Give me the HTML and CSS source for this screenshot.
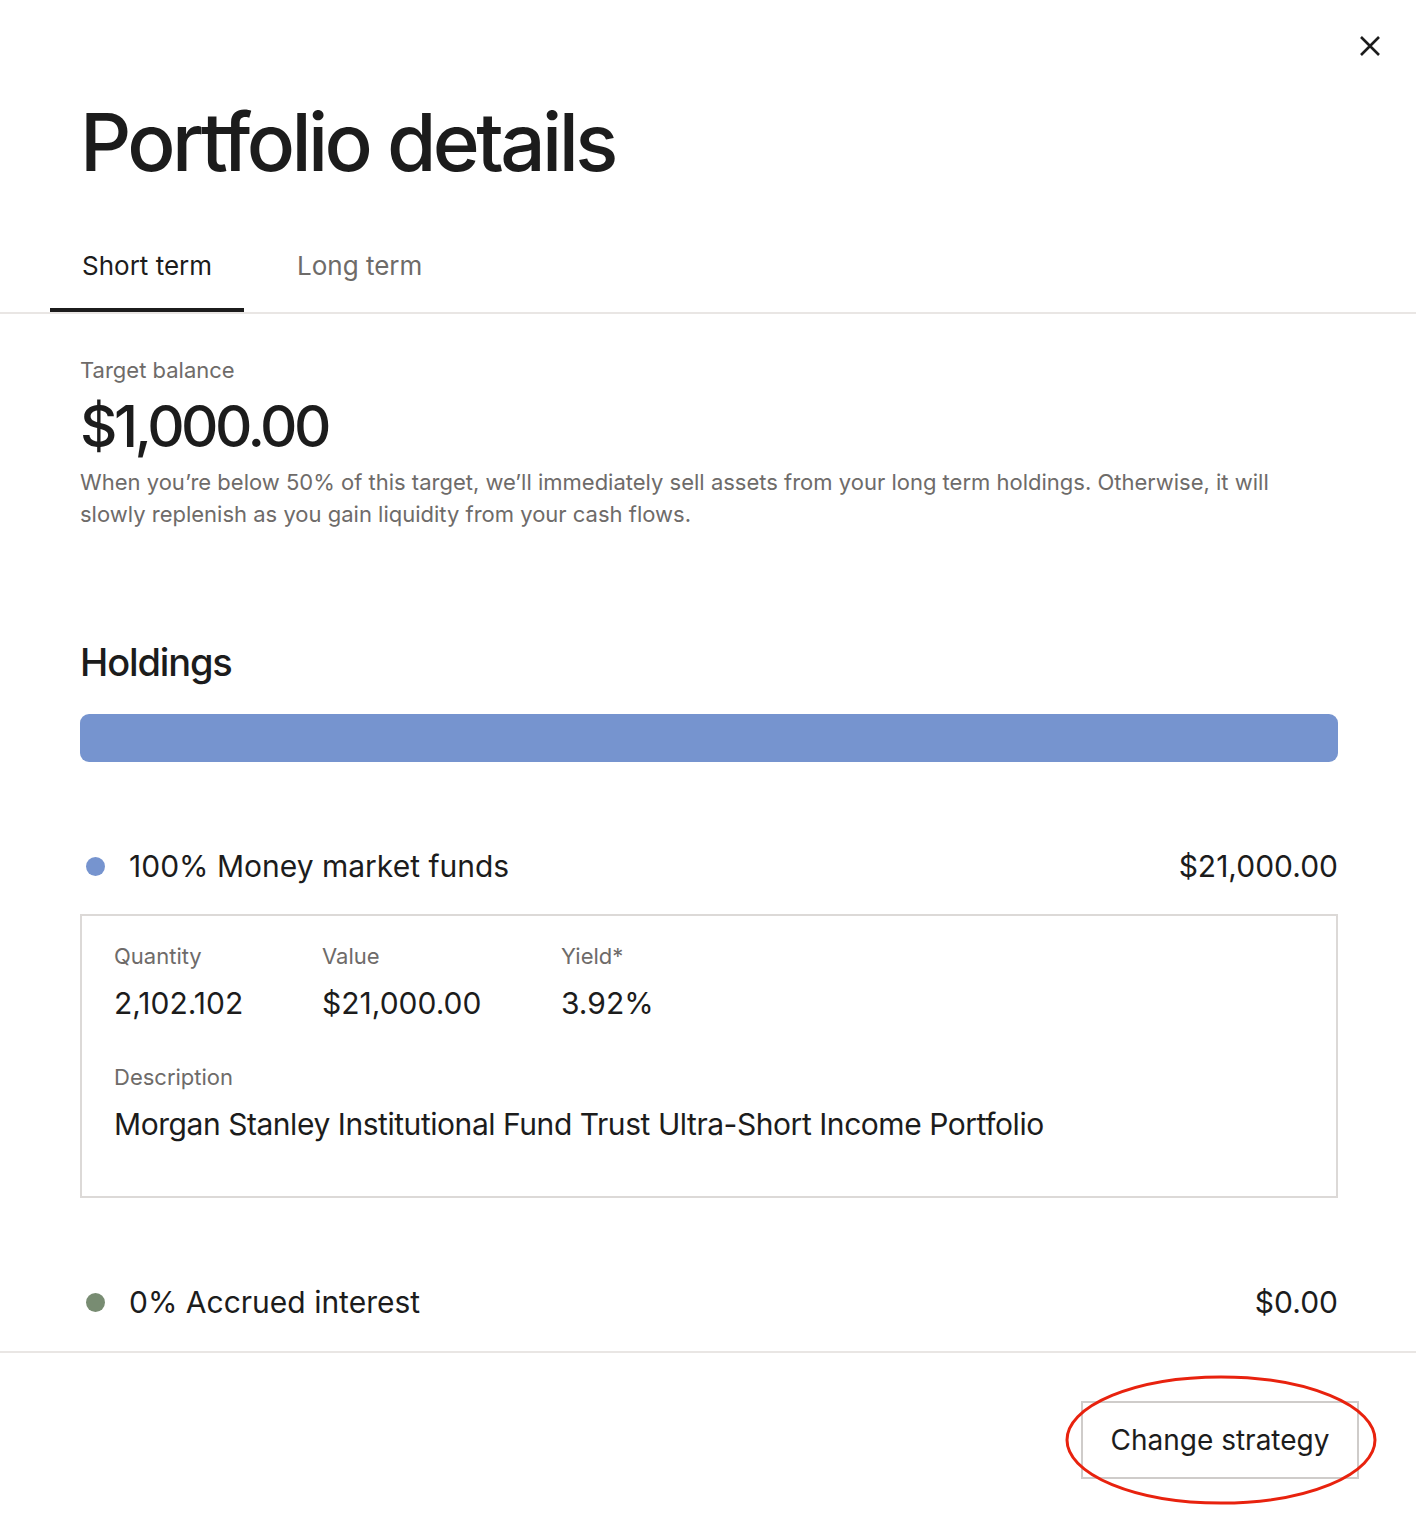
FILE: index.html
```html
<!DOCTYPE html>
<html lang="en">
<head>
    <meta charset="UTF-8">
    <meta name="viewport" content="width=device-width, initial-scale=1.0">
    <title>Portfolio details</title>
    <link rel="stylesheet" href="styles.css">
</head>
<body>
    <div class="panel">
        <header class="panel-header">
            <button class="close-button" aria-label="Close">
                <svg width="22" height="22" viewBox="0 0 22 22">
                    <path d="M2 2 L20 20 M20 2 L2 20" stroke="#1c1c1c" stroke-width="2.6" stroke-linecap="butt"/>
                </svg>
            </button>
            <h1>Portfolio details</h1>
        </header>

        <nav class="tabs">
            <button class="tab active">Short term</button>
            <button class="tab">Long term</button>
        </nav>

        <main class="content">
            <section class="target">
                <div class="label">Target balance</div>
                <div class="target-amount">$1,000.00</div>
                <p class="target-note">When you’re below 50% of this target, we’ll immediately sell assets from your long term holdings. Otherwise, it will slowly replenish as you gain liquidity from your cash flows.</p>
            </section>

            <section class="holdings">
                <h2>Holdings</h2>
                <div class="allocation-bar">
                    <div class="allocation-segment" style="width: 100%; background-color: #7694cf;"></div>
                </div>

                <div class="holding-row">
                    <span class="dot dot-blue"></span>
                    <span class="holding-name">100% Money market funds</span>
                    <span class="holding-amount">$21,000.00</span>
                </div>

                <div class="holding-card">
                    <div class="stats">
                        <div class="stat stat-quantity">
                            <div class="label">Quantity</div>
                            <div class="stat-value">2,102.102</div>
                        </div>
                        <div class="stat stat-value-col">
                            <div class="label">Value</div>
                            <div class="stat-value">$21,000.00</div>
                        </div>
                        <div class="stat">
                            <div class="label">Yield*</div>
                            <div class="stat-value">3.92%</div>
                        </div>
                    </div>
                    <div class="label">Description</div>
                    <div class="stat-value description">Morgan Stanley Institutional Fund Trust Ultra-Short Income Portfolio</div>
                </div>

                <div class="holding-row last">
                    <span class="dot dot-green"></span>
                    <span class="holding-name">0% Accrued interest</span>
                    <span class="holding-amount">$0.00</span>
                </div>
            </section>
        </main>

        <footer class="panel-footer">
            <div class="button-wrap">
                <button class="outline-button">Change strategy</button>
                <svg class="annotation" width="314" height="132" viewBox="0 0 314 132">
                    <ellipse cx="157" cy="66" rx="154" ry="63" fill="none" stroke="#e8220e" stroke-width="3"/>
                </svg>
            </div>
        </footer>
    </div>
</body>
</html>
```

FILE: styles.css
```css
body {
    margin: 0;
    padding: 0;
    background: #ffffff;
    color: #1c1c1c;
    font-family: Inter, "Noto Sans", Arial, sans-serif;
}
.panel {
    width: 1416px;
    display: flex;
    flex-direction: column;
}
.panel-header {
    position: relative;
    padding: 96px 80px 0 80px;
}
.close-button {
    position: absolute;
    top: 35px;
    right: 35px;
    background: none;
    border: none;
    padding: 0;
    cursor: pointer;
}
h1 {
    margin: 0;
    font-size: 80px;
    font-weight: 500;
    letter-spacing: -0.045em;
    line-height: 92px;
}
.tabs {
    display: flex;
    gap: 21px;
    margin-top: 44px;
    padding-left: 50px;
    border-bottom: 2px solid #e9e6e4;
}
.tab {
    background: none;
    border: none;
    border-bottom: 4px solid transparent;
    padding: 18px 32px 27px 32px;
    font-family: inherit;
    font-size: 26px;
    color: #6e6b69;
    cursor: pointer;
}
.tab.active {
    color: #1c1c1c;
    border-bottom-color: #1c1c1c;
}
.content {
    padding: 43px 78px 0 80px;
}
.label {
    font-size: 22px;
    color: #6e6b69;
}
.target-amount {
    font-size: 58px;
    font-weight: 500;
    letter-spacing: -0.06em;
    line-height: 72px;
    margin-top: 7px;
}
.target-note {
    margin: 4px 0 0 0;
    max-width: 1210px;
    font-size: 22px;
    line-height: 32px;
    color: #6e6b69;
}
.holdings h2 {
    margin: 108px 0 0 0;
    font-size: 38px;
    font-weight: 500;
    letter-spacing: -0.03em;
    line-height: 48px;
}
.allocation-bar {
    display: flex;
    height: 48px;
    margin-top: 28px;
    border-radius: 9px;
    overflow: hidden;
}
.holding-row {
    display: flex;
    align-items: center;
    margin-top: 84px;
    font-size: 30px;
    line-height: 40px;
}
.holding-row.last {
    margin-top: 84px;
    margin-bottom: 29px;
}
.dot {
    width: 19px;
    height: 19px;
    border-radius: 50%;
    margin: 0 24px 0 6px;
}
.dot-blue {
    background-color: #7694cf;
}
.dot-green {
    background-color: #788c72;
}
.holding-name {
    flex: 1;
}
.holding-card {
    margin-top: 28px;
    border: 2px solid #dcd9d7;
    padding: 27px 32px 54px 32px;
}
.stats {
    display: flex;
    margin-bottom: 43px;
}
.stat-quantity {
    width: 208px;
}
.stat-value-col {
    width: 239px;
}
.stat .label {
    margin-bottom: 16px;
}
.stat-value {
    font-size: 30px;
    line-height: 36px;
}
.stat-value.description {
    letter-spacing: -0.015em;
}
.holding-card > .label {
    margin-bottom: 16px;
}
.panel-footer {
    border-top: 2px solid #e9e6e4;
    display: flex;
    justify-content: flex-end;
    padding: 48px 57px 44px 0;
}
.button-wrap {
    position: relative;
}
.outline-button {
    display: block;
    background: #ffffff;
    border: 2px solid #cfccca;
    padding: 0;
    height: 78px;
    width: 278px;
    white-space: nowrap;
    font-family: inherit;
    font-size: 28px;
    color: #1c1c1c;
    cursor: pointer;
}
.annotation {
    position: absolute;
    left: -17px;
    top: -27px;
    pointer-events: none;
}
```
